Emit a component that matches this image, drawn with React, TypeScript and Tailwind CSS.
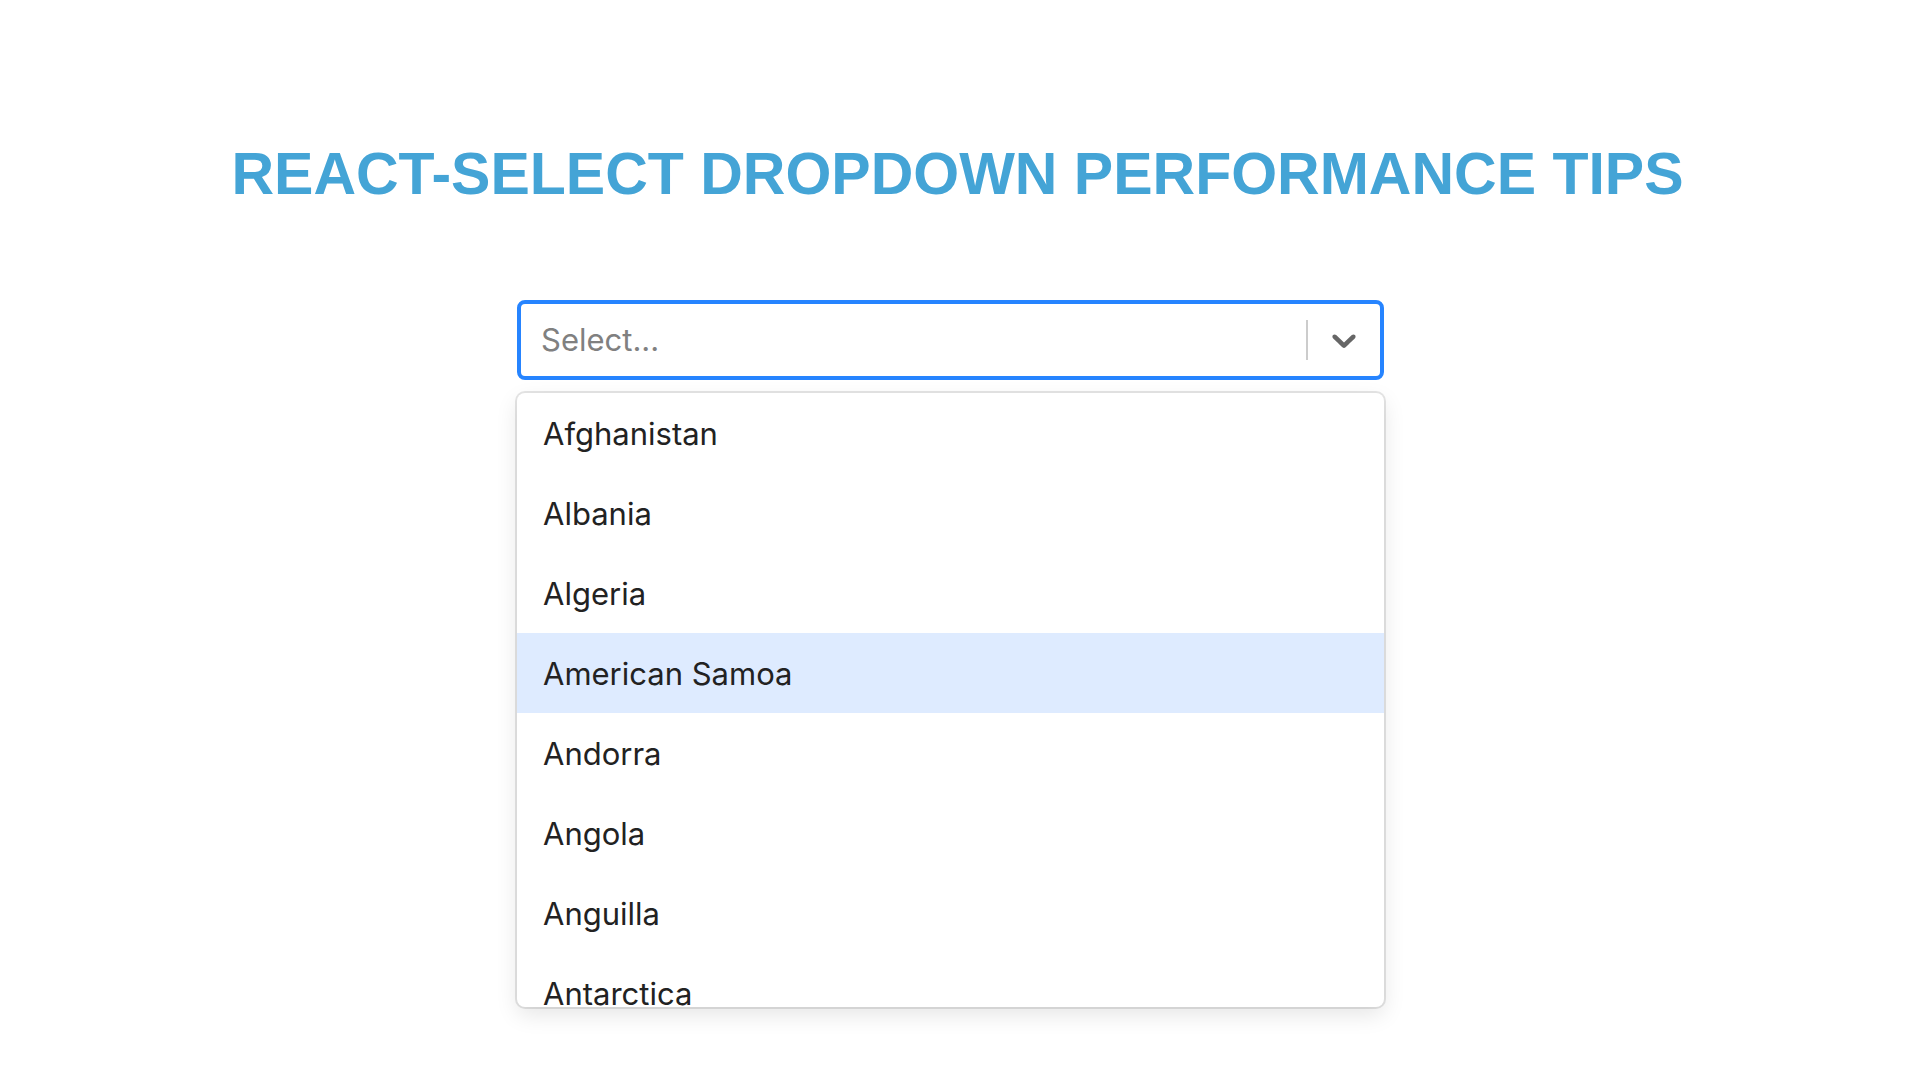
const countries = [
  "Afghanistan",
  "Albania",
  "Algeria",
  "American Samoa",
  "Andorra",
  "Angola",
  "Anguilla",
  "Antarctica",
];

const ChevronDown = () => (
  <svg width="40" height="40" viewBox="0 0 20 20" fill="#666666" aria-hidden="true">
    <path d="M4.516 7.548c0.436-0.446 1.043-0.481 1.576 0l3.908 3.747 3.908-3.747c0.533-0.481 1.141-0.446 1.574 0 0.436 0.445 0.408 1.197 0 1.615-0.406 0.418-4.695 4.502-4.695 4.502-0.217 0.223-0.502 0.335-0.787 0.335s-0.57-0.112-0.789-0.335c0 0-4.287-4.084-4.695-4.502s-0.436-1.17 0-1.615z" />
  </svg>
);

export default function App() {
  const active = "American Samoa";

  return (
    <div className="min-h-[1080px] w-full bg-white">
      <h1 className="pr-[5px] pt-[145px] text-center font-['Liberation_Sans',Arial,sans-serif] text-[59px] font-bold leading-[58px] text-[#44a4d6]">
        REACT-SELECT DROPDOWN PERFORMANCE TIPS
      </h1>

      <div className="ml-[517px] mt-[97px] w-[867px] font-['Inter','Noto_Sans',sans-serif]">
        {/* control */}
        <div className="flex h-[80px] items-center rounded-[8px] border-4 border-[#2684ff] bg-white">
          <div className="flex-1 pl-[20px] pt-[1px] text-[31px] text-[#808080]">Select...</div>
          <div className="flex items-center">
            <span className="h-[40px] w-[2px] bg-[#cccccc]" />
            <div className="flex w-[72px] items-center justify-center">
              <ChevronDown />
            </div>
          </div>
        </div>

        {/* menu */}
        <div className="mt-[13px] h-[614px] overflow-hidden rounded-[8px] bg-white shadow-[0_0_0_2px_rgba(0,0,0,0.1),0_8px_22px_rgba(0,0,0,0.1)]">
          {countries.map((c) => (
            <div
              key={c}
              className={`flex h-[80px] items-center pl-[26px] pt-[3px] text-[31px] text-[#222222] ${
                c === active ? "bg-[#deebff]" : ""
              }`}
            >
              {c}
            </div>
          ))}
        </div>
      </div>
    </div>
  );
}
